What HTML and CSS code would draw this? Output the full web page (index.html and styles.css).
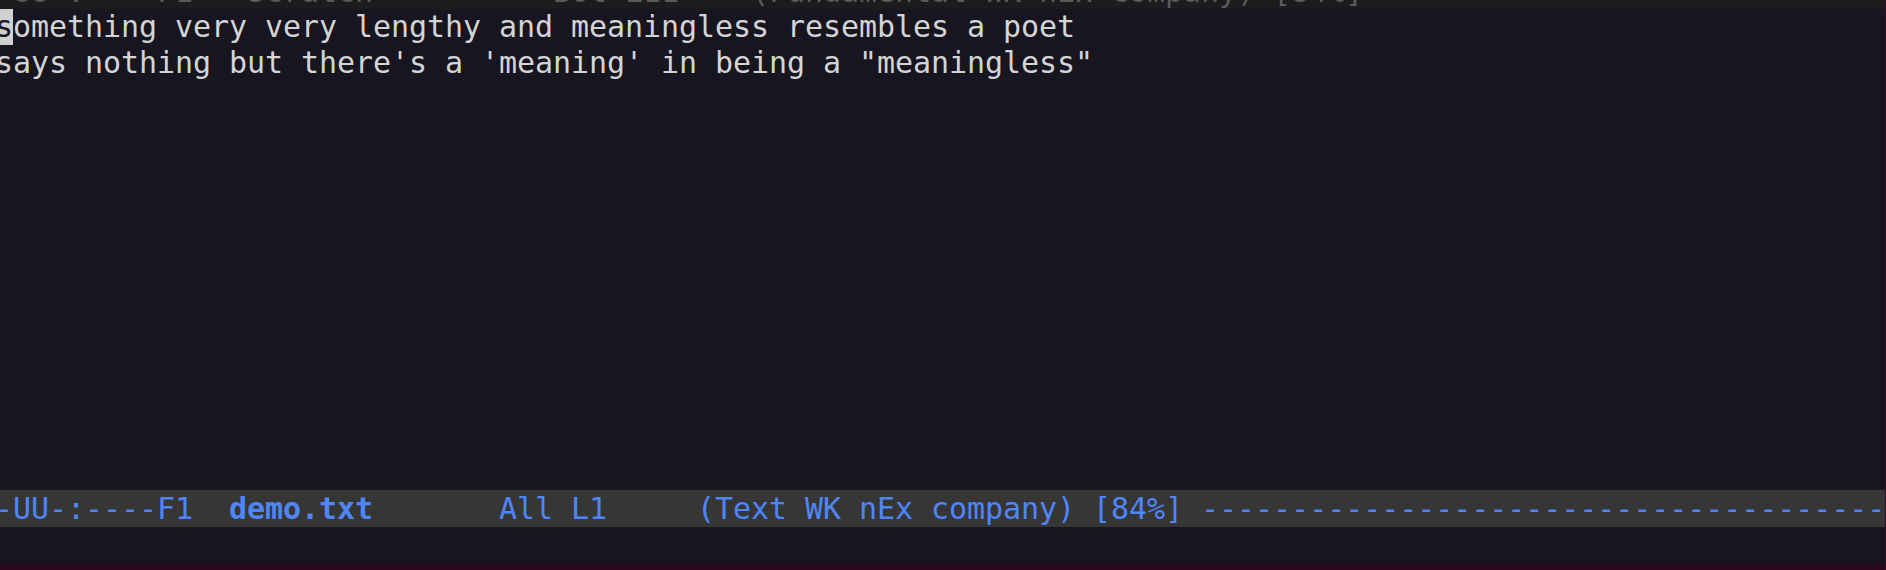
FILE: index.html
```html
<!DOCTYPE html>
<html>
<head>
<meta charset="utf-8">
<link rel="stylesheet" href="styles.css">
</head>
<body>
<div class="frame">
  <div class="prev-modeline"><div class="ml-text">-UU-:----F1  *scratch*         Bot L11    (Fundamental WK nEx company) [84%] --------------------------------------------------</div></div>
  <div class="buffer">
    <div class="line"><span class="cursor">s</span>omething very very lengthy and meaningless resembles a poet</div>
    <div class="line">says nothing but there's a 'meaning' in being a "meaningless"</div>
  </div>
  <div class="modeline"><div class="ml-text">-UU-:----F1  <b class="bufname">demo.txt</b>       All L1     (Text WK nEx company) [84%] ----------------------------------------------------------------</div></div>
  <div class="echo"></div>
  <div class="strip"></div>
</div>
</body>
</html>
```
FILE: styles.css
```css
html, body {
  margin: 0;
  padding: 0;
  background: #161520;
  overflow: hidden;
}
.frame {
  width: 1885px;
  height: 570px;
  display: flex;
  flex-direction: column;
  border-right: 1px solid #3a0c24;
  font-family: "DejaVu Sans Mono", monospace;
  font-size: 30px;
  letter-spacing: -0.06px;
  overflow: hidden;
}
.prev-modeline {
  height: 9px;
  background: #1c1c1c;
  overflow: hidden;
  flex: none;
}
.prev-modeline .ml-text {
  color: #5a5a5a;
  margin-top: -27px;
}
.ml-text {
  white-space: pre;
  line-height: 37px;
  margin-left: -5px;
}
.buffer {
  flex: 1;
  color: #d4d4d4;
  margin-left: -5px;
}
.line {
  white-space: pre;
  line-height: 36px;
}
.cursor {
  background: #d0d0d0;
  color: #161520;
  display: inline-block;
  height: 36px;
}
.modeline {
  height: 37px;
  flex: none;
  background: #363636;
  color: #4f86f6;
  overflow: hidden;
}
.bufname {
  font-weight: bold;
}
.echo {
  height: 37px;
  flex: none;
}
.strip {
  height: 6px;
  flex: none;
  background: #2b0a1f;
}
```
